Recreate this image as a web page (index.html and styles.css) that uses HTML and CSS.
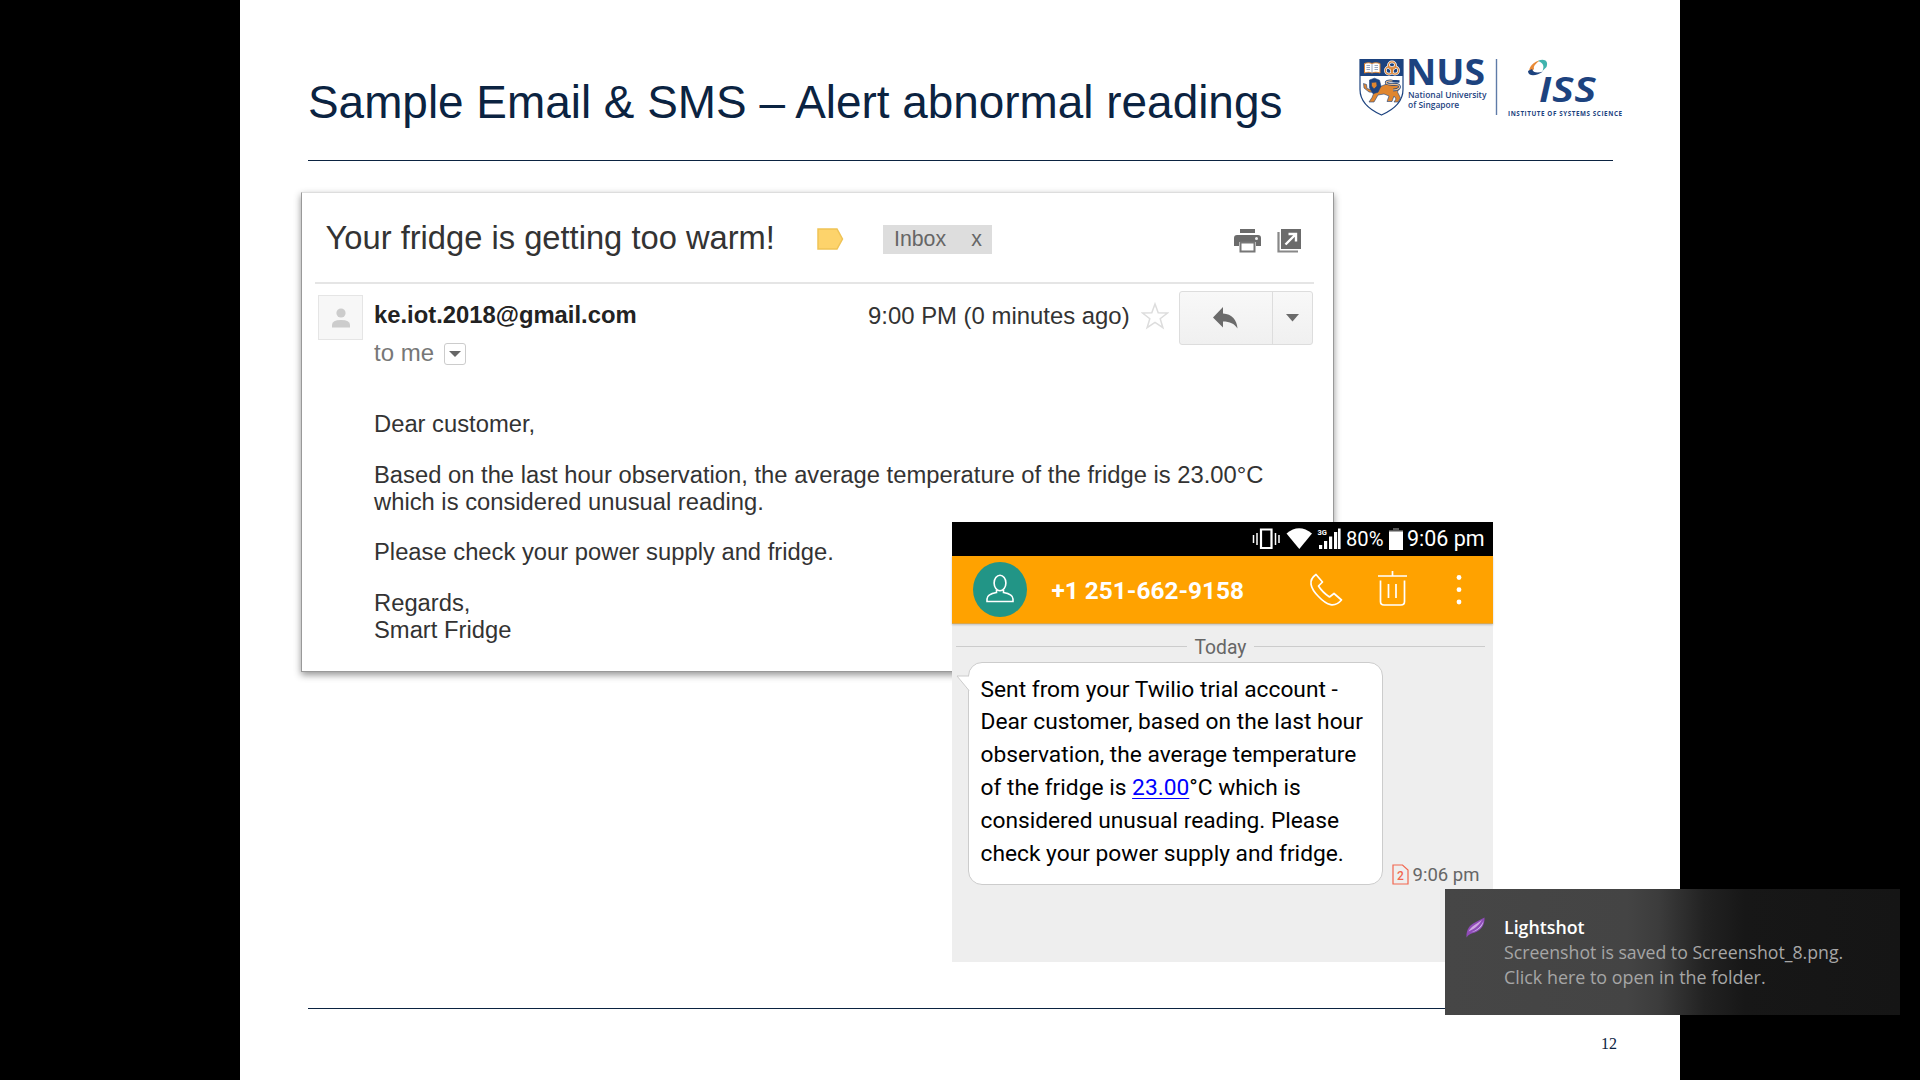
FILE: index.html
```
<!DOCTYPE html>
<html lang="en">
<head>
<meta charset="utf-8">
<title>Sample Email &amp; SMS</title>
<link rel="stylesheet" href="styles.css">
</head>
<body>
<main class="slide">
  <header class="slide-header">
    <h1 class="slide-title">Sample Email &amp; SMS – Alert abnormal readings</h1>
    <svg class="logo" width="270" height="66" viewBox="1357 55 270 66">
      <path d="M1360 59.500h43v30c0 12-9 20-21.500 25.500C1369 109.500 1360 101.500 1360 89.500z" fill="#fff" stroke="#1d437f" stroke-width="1.200"/>
      <path d="M1360 59.500h43v16.500h-43z" fill="#1d437f"/>
      <path d="M1364.500 63.500c3-1 5-1 7.500 0 2.500-1 5-1 8 0v9.500c-3-1-5.500-1-8 0-2.500-1-4.500-1-7.500 0z" fill="#fff" stroke="#d98233" stroke-width="1"/>
      <path d="M1372 64v9M1366.500 65.500h3.500M1366.500 67.500h3.500M1366.500 69.500h3.500M1374.500 65.500h3.500M1374.500 67.500h3.500M1374.500 69.500h3.500" stroke="#7f8fb0" stroke-width=".8"/>
      <g fill="none" stroke="#fff" stroke-width="2.600"><circle cx="1392" cy="65.500" r="3.600"/><circle cx="1389" cy="70.500" r="3.600"/><circle cx="1395" cy="70.500" r="3.600"/></g>
      <g fill="none" stroke="#d98233" stroke-width="1.300"><circle cx="1392" cy="65.500" r="3.600"/><circle cx="1389" cy="70.500" r="3.600"/><circle cx="1395" cy="70.500" r="3.600"/></g>
      <g stroke="#1d437f" stroke-width=".6">
        <path d="M1372 90l-5-1.500-.5-4-3-1 .5 4.500 5 4 5 .500-2 5-3 4.500h5l4-7 6-1 5 2-2 5.500h5l2-5.500 2 3-2 3h4l2.500-4-3-6c2-4 1-9-2-9l-9 1z" fill="#e0862f"/>
        <path d="M1369.500 80l5-1.800 5 2 1.500 6-3 6-5 1.500-3.500-6z" fill="#1d437f"/>
        <path d="M1371.500 82.500l5-.5.5 4-3 3-2.500-3z" fill="#e0862f"/>
      </g>
      <path d="M1393 90c6 0 8-3 5.500-5-2-1.500-9 .5-12-1.500-1.500-2 2-3 6-2.500l7 .5" fill="none" stroke="#1d437f" stroke-width="2.600"/>
      <path d="M1393 90c6 0 8-3 5.500-5-2-1.500-9 .5-12-1.500-1.500-2 2-3 6-2.500" fill="none" stroke="#e9bf91" stroke-width="1.200"/>
      <text class="logo-nus" x="1406" y="85" textLength="79" lengthAdjust="spacingAndGlyphs">NUS</text>
      <text class="logo-sub" x="1408" y="97.500">National University</text>
      <text class="logo-sub" x="1408" y="107.500">of Singapore</text>
      <path d="M1496.500 59v56" stroke="#5f7ba8" stroke-width="1.400"/>
      <path d="M1530 73c-3-5 4-12 11-13-4 2-8 6-7 9z" fill="#e98a35"/>
      <path d="M1538 61c6-3 11 0 8.500 6l-4 4c2-5 1-8-4.500-10z" fill="#3fb3ad"/>
      <path d="M1528 71c0 6 9 5 15 .500-5 1.500-10 1.500-11-2.500z" fill="#1d437f"/>
      <text class="logo-iss" x="1539" y="101.500" textLength="58" lengthAdjust="spacingAndGlyphs">ıss</text>
      <text class="logo-inst" x="1508" y="115.500" textLength="114">INSTITUTE OF SYSTEMS SCIENCE</text>
    </svg>
  </header>

  <article class="email">
    <header class="email-head">
      <h2 class="subject">Your fridge is getting too warm!</h2>
      <svg class="tag" width="27" height="22" viewBox="0 0 27 22"><path d="M1 1h19l5.500 10L20 21H1z" fill="#fdd36b" stroke="#efc356" stroke-width="1.500"/></svg>
      <div class="chip"><span>Inbox</span><span>x</span></div>
      <svg class="printer" width="27" height="24" viewBox="0 0 27 24"><path d="M6 0h15v4H6zM3 6h21q3 0 3 3v8h-5v-4H5v4H0V9q0-3 3-3z" fill="#6b6b6b"/><path d="M6.500 13.500h14v9h-14z" fill="#fff" stroke="#777" stroke-width="2"/><circle cx="22.500" cy="9.500" r="1.500" fill="#eee"/></svg>
      <svg class="popout" width="24" height="24" viewBox="0 0 24 24"><path d="M1.500 3v19.500H21" fill="none" stroke="#888" stroke-width="2.200"/><path d="M4 0h20v20H4z" fill="#6b6b6b"/><path d="M8.500 15.500L18 6M11.500 5h7.500v7.500" fill="none" stroke="#fff" stroke-width="2.400"/></svg>
    </header>
    <div class="sender">
      <div class="avatar"><svg width="18" height="20" viewBox="0 0 18 20"><circle cx="9" cy="5" r="4.600" fill="#ccc"/><path d="M0 19.500v-2.500q0-5 9-5t9 5v2.500z" fill="#ccc"/></svg></div>
      <div class="who">
        <div class="address">ke.iot.2018@gmail.com</div>
        <div class="to">to me <span class="to-drop"><svg width="12" height="6" viewBox="0 0 12 6"><path d="M0 0h12L6 6z" fill="#666"/></svg></span></div>
      </div>
      <div class="time">9:00 PM (0 minutes ago)</div>
      <svg class="star" width="28" height="28" viewBox="0 0 28 28"><path d="M14 2l3.200 8.800 9.300.2-7.300 5.700 2.700 9-7.900-5.300-7.900 5.300 2.700-9L1.500 11l9.300-.2z" fill="none" stroke="#ddd" stroke-width="1.500"/></svg>
      <div class="reply">
        <span class="reply-main"><svg width="25" height="22" viewBox="0 0 25 22"><path d="M10 0v6.500C19 7 24 13 24.500 21.500 21 16.500 17 14.500 10 14.500V20.500L0 10.500z" fill="#6b6b6b"/></svg></span>
        <span class="reply-more"><svg width="13" height="8" viewBox="0 0 13 8"><path d="M0 0h13L6.500 7.500z" fill="#6b6b6b"/></svg></span>
      </div>
    </div>
    <div class="email-body">
      <p>Dear customer,</p>
      <p>Based on the last hour observation, the average temperature of the fridge is 23.00°C<br>which is considered unusual reading.</p>
      <p>Please check your power supply and fridge.</p>
      <p>Regards,<br>Smart Fridge</p>
    </div>
  </article>

  <footer class="slide-footer">12</footer>
</main>

<section class="phone">
  <div class="status">
    <svg width="91" height="24" viewBox="0 0 91 24">
      <path d="M9 2.500h10.500v18.500H9z" fill="none" stroke="#fff" stroke-width="2.200"/>
      <path d="M1.500 8v8M5 6v12M23.500 6v12M27 8v8" stroke="#fff" stroke-width="1.500"/>
      <path d="M34.500 6.500Q47-4 60 6.500L47.300 22z" fill="#fff"/>
      <path d="M67 18h3.200v4H67zM72 14h3.200v8H72zM77 9.500h3.200V22H77zM82 5h3.200v17H82zM86 1.500h2.600V22H86z" fill="#fff"/>
      <text class="net" x="65.500" y="7.500">3G</text>
    </svg>
    <span class="percent">80%</span>
    <svg class="battery" width="14" height="22" viewBox="0 0 14 22"><path d="M4 0h6v2h4v3H0V2h4z" fill="#555"/><path d="M0 3.500h14V22H0z" fill="#fff"/></svg>
    <span class="clock">9:06 pm</span>
  </div>
  <div class="contact">
    <div class="face"><svg width="28" height="30" viewBox="0 0 28 30" fill="none" stroke="#fff" stroke-width="1.600"><ellipse cx="14" cy="9" rx="5.900" ry="7.700"/><path d="M10.500 16v2.500Q1 20 1 25v2.500h26V25q0-5-9.500-6.500V16"/></svg></div>
    <strong class="number">+1 251-662-9158</strong>
    <svg class="call" width="34" height="34" viewBox="0 0 34 34"><path d="M7 1.500C-1 7 1 15 9.500 23.500c8.500 9 16 11.500 23 3.500l-7.500-6.500-4.500 3.500C16 21 12 17 9.500 13l4-4z" fill="none" stroke="#fff" stroke-width="1.700" stroke-linejoin="round"/></svg>
    <svg class="trash" width="30" height="36" viewBox="0 0 30 36"><path d="M0 5h29M14.500 0v5M2.500 9.500v21q0 3.500 3.500 3.500h17q3.500 0 3.500-3.500v-21M10.500 13v14M18 13v14" fill="none" stroke="#fff" stroke-width="1.700"/></svg>
    <svg class="dots" width="6" height="32" viewBox="0 0 6 32" fill="#fff"><circle cx="3" cy="3.500" r="2.400"/><circle cx="3" cy="15.700" r="2.400"/><circle cx="3" cy="28" r="2.400"/></svg>
  </div>
  <div class="day"><span>Today</span></div>
  <div class="message">
    <div class="bubble">
      <svg class="tail" width="14" height="17" viewBox="0 0 14 17"><path d="M14 1H1l12 14.500h1z" fill="#fff"/><path d="M13 1H1l12 14.500" fill="none" stroke="#ccc"/></svg>
      Sent from your Twilio trial account -<br>Dear customer, based on the last hour<br>observation, the average temperature<br>of the fridge is <a class="link">23.00</a>°C which is<br>considered unusual reading. Please<br>check your power supply and fridge.
    </div>
    <div class="stamp">
      <svg width="17" height="21" viewBox="0 0 17 21"><path d="M1 1h9.500L16 6v14H1z" fill="none" stroke="#f2664f" stroke-width="1.200"/><text class="sim" x="5" y="15.500">2</text></svg>
      <span>9:06 pm</span>
    </div>
  </div>
</section>

<aside class="toast">
  <svg class="feather" width="19" height="21" viewBox="0 0 19 21"><path d="M.5 20.500C0 12 4 8 9 5.500L18.500.500C19 8 15 13 9 15.500 5 16.500 2.500 17.500.500 20.500z" fill="#8f4bb8"/><path d="M2.500 14.500C5 9.500 10 7.500 16 3 12 9.500 8 12 2.500 14.500z" fill="#cfa6e2"/><path d="M5 15.500C11 13 15 9.500 17.500 4c-1 6-5 9.500-12.500 11.500z" fill="#d3c3ee"/></svg>
  <div class="toast-text">
    <div class="toast-title">Lightshot</div>
    <div>Screenshot is saved to Screenshot_8.png.</div>
    <div class="toast-hint">Click here to open in the folder.</div>
  </div>
</aside>
</body>
</html>
```
FILE: styles.css
```
* { box-sizing: border-box; }
body {
  margin: 0;
  width: 1920px;
  height: 1080px;
  overflow: hidden;
  background: #000;
  position: relative;
  font-family: "Liberation Sans", Arial, sans-serif;
}
h1, h2, p { margin: 0; font-weight: 400; }
svg { display: block; flex: none; }

.slide {
  width: 1440px;
  height: 1080px;
  margin: 0 auto;
  background: #fff;
  display: flex;
  flex-direction: column;
}
.slide-header {
  height: 161px;
  margin: 0 67px 31px 68px;
  border-bottom: 1px solid #0b2341;
  display: flex;
  justify-content: space-between;
}
.slide-title {
  margin-top: 72px;
  font-size: 45.9px;
  line-height: 60px;
  color: #0b2341;
  white-space: nowrap;
}
.logo { margin: 55px -14px 0 0; overflow: visible; }
.logo text { font-family: "Open Sans", "Noto Sans", sans-serif; fill: #1d437f; }
.logo .logo-nus { font-size: 35.5px; font-weight: 700; }
.logo .logo-sub { font-size: 8.45px; font-weight: 600; }
.logo .logo-iss { font-size: 46px; font-weight: 600; font-style: italic; }
.logo .logo-inst { font-size: 6.3px; font-weight: 700; }

.email {
  width: 1033px;
  height: 480px;
  margin-left: 61px;
  border: 1px solid #999;
  border-top-color: #ddd;
  background: #fff;
  box-shadow: 0 3px 7px rgba(0, 0, 0, .42);
  color: #333;
}
.email-head {
  height: 91px;
  margin: 0 19px 0 13px;
  padding-left: 10.500px;
  border-bottom: 2px solid #e5e5e5;
  display: flex;
  align-items: flex-start;
}
.subject { width: 491.500px; margin-top: 25px; font-size: 32.700px; line-height: 40px; white-space: nowrap; color: #333; }
.tag { margin-top: 35px; }
.chip {
  width: 109px;
  height: 29px;
  margin: 32px 242px 0 39px;
  padding: 0 10px 0 11px;
  background: #ddd;
  color: #666;
  font-size: 21.3px;
  line-height: 28px;
  display: flex;
  justify-content: space-between;
}
.printer { margin: 36px 16px 0 0; }
.popout { margin-top: 36px; }

.sender { height: 126px; display: flex; align-items: flex-start; padding-left: 16px; }
.avatar {
  width: 45px;
  height: 45px;
  margin-top: 11px;
  border: 1.500px solid #e5e5e5;
  background: #f7f7f7;
  display: flex;
  align-items: center;
  justify-content: center;
}
.who { width: 506px; margin-left: 11px; }
.address { margin-top: 16px; font-size: 23.8px; font-weight: 700; line-height: 30px; color: #222; }
.to { margin-top: 8px; font-size: 24px; line-height: 30px; color: #777; display: flex; gap: 9.500px; }
.to-drop {
  width: 22px;
  height: 22px;
  margin-top: 5px;
  border: 1.500px solid #ccc;
  border-radius: 3px;
  display: flex;
  align-items: center;
  justify-content: center;
}
.time { width: 262px; margin-top: 16.500px; margin-left: -12px; font-size: 23.9px; line-height: 30px; white-space: nowrap; }
.star { margin: 18px 0 0 10.500px; }
.reply {
  width: 134px;
  height: 54px;
  margin: 7px 0 0 10px;
  border: 1.500px solid #ddd;
  border-radius: 3px;
  background: linear-gradient(#f8f8f8, #f0f0f0);
  display: flex;
}
.reply span { display: flex; align-items: center; justify-content: center; }
.reply-main { width: 93px; border-right: 1px solid #ddd; }
.reply-more { flex: 1; }

.email-body { padding-left: 72px; font-size: 23.770px; line-height: 27px; white-space: nowrap; }
.email-body p { margin-bottom: 23.600px; }

.slide-footer {
  height: 72px;
  margin: auto 67px 0 68px;
  padding: 23px 0 0;
  border-top: 1px solid #0b2341;
  font: 16px/24px "Liberation Serif", serif;
  text-align: right;
  text-indent: 0;
  color: #0b2341;
}
.slide-footer { padding-right: 0; letter-spacing: 0; }
.slide-footer::after { content: ""; display: inline-block; margin-right: -4px; }

.phone {
  position: absolute;
  left: 952px;
  top: 522px;
  width: 541px;
  height: 440px;
  background: #eee;
  font-family: Roboto, sans-serif;
}
.status {
  height: 34px;
  padding-left: 300px;
  background: #000;
  color: #fff;
  display: flex;
  align-items: center;
  line-height: 34px;
  white-space: nowrap;
}
.net { font: 700 7.5px Roboto, sans-serif; fill: #fff; }
.percent { margin-left: 3px; width: 43px; font-size: 20.2px; }
.battery { margin-right: 4px; }
.clock { font-size: 21.5px; }
.contact {
  height: 68px;
  padding-left: 21px;
  background: #ffa200;
  border-bottom: 1px solid #d9a64c;
  box-shadow: 0 1px 2px rgba(0, 0, 0, .2);
  display: flex;
  align-items: flex-start;
}
.face {
  width: 54px;
  height: 55px;
  margin-top: 5.500px;
  border-radius: 50%;
  background: #229586;
  display: flex;
  align-items: center;
  justify-content: center;
}
.number { width: 257px; margin: 18px 0 0 24.500px; font-size: 24.400px; line-height: 34px; color: #fff; white-space: nowrap; }
.call { margin: 17px 0 0; }
.trash { margin: 15px 0 0 35.500px; }
.dots { margin: 18px 0 0 48px; }

.day {
  height: 38px;
  padding: 6px 8px 0 4px;
  font-size: 19.3px;
  line-height: 36px;
  color: #666;
  display: flex;
  gap: 8px;
}
.day::before, .day::after { content: ""; flex: 1; height: 1px; margin-top: 16px; background: #ccc; }

.message { display: flex; align-items: flex-end; }
.bubble {
  position: relative;
  width: 415px;
  height: 223px;
  margin-left: 16px;
  padding: 10.500px 0 0 11.500px;
  border: 1px solid #ccc;
  border-radius: 14px;
  background: #fff;
  color: #000;
  font-size: 22.75px;
  line-height: 32.900px;
  white-space: nowrap;
}
.tail { position: absolute; left: -13px; top: 12px; }
.link { color: #00f; text-decoration: underline; text-decoration-thickness: 1px; text-underline-offset: 3px; }
.stamp { margin-left: 9px; display: flex; align-items: flex-end; gap: 3.500px; font-size: 18.5px; line-height: 24px; color: #666; white-space: nowrap; }
.stamp span { margin-bottom: -2px; }
.sim { font: 500 12px Roboto, sans-serif; fill: #f2664f; }

.toast {
  position: absolute;
  left: 1445px;
  top: 889px;
  width: 455px;
  height: 126px;
  padding: 25.500px 0 0 21px;
  background: linear-gradient(90deg, #464646 0, #444 40%, #3c3c3c 47%, #222 57%, #171717 66%, #151515 100%);
  color: #a6a6a6;
  font-family: "Open Sans", "Noto Sans", sans-serif;
  font-size: 17.7px;
  line-height: 25px;
  display: flex;
  gap: 19px;
  white-space: nowrap;
}
.feather { margin-top: 2px; }
.toast-title { font-size: 17.8px; font-weight: 600; color: #fff; }
.toast-hint { font-size: 17.9px; }
```
